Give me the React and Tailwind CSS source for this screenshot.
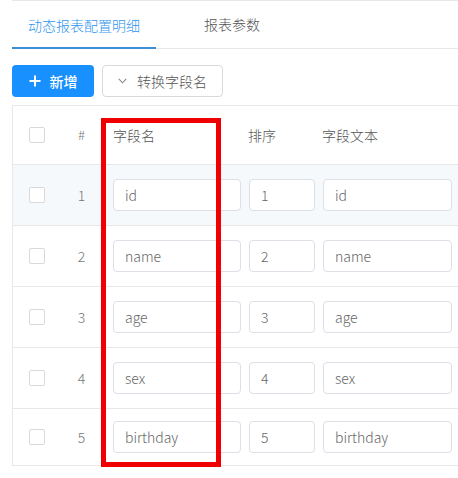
import React from 'react';

const rows = [
  { no: 1, name: 'id', sort: '1', text: 'id' },
  { no: 2, name: 'name', sort: '2', text: 'name' },
  { no: 3, name: 'age', sort: '3', text: 'age' },
  { no: 4, name: 'sex', sort: '4', text: 'sex' },
  { no: 5, name: 'birthday', sort: '5', text: 'birthday' },
];

const Checkbox = () => (
  <span className="block w-4 h-4 border border-[#d9d9d9] rounded-[2px] bg-white"></span>
);

const Field = ({ value, width }) => (
  <div className={`${width} h-[32px] border border-[#dcdfe6] rounded-[4px] bg-white flex items-center px-[11px] text-[14px] font-light text-[#666]`}>
    {value}
  </div>
);

const App = () => {
  return (
    <div className="relative w-[458px] h-[478px] overflow-hidden bg-white font-['Noto_Sans_CJK_SC',sans-serif]">
      <div className="pl-3">
        {/* tabs */}
        <div className="border-t border-b border-[#e8e8e8] h-[49px] flex items-end">
          <div className="h-full flex items-center justify-center px-4 mr-8 text-[14px] font-light text-[#2f95ee] border-b-2 border-[#3a8fd6] translate-y-[1px] pt-[2px]">
            动态报表配置明细
          </div>
          <div className="h-full flex items-center px-4 text-[14px] font-light text-[#555]">
            报表参数
          </div>
        </div>

        {/* toolbar */}
        <div className="flex gap-2 mt-4 h-8">
          <button className="w-[82px] h-8 rounded-[4px] bg-[#1890ff] text-white text-[14px] flex items-center justify-center gap-[9px] font-medium">
            <svg width="12" height="12" viewBox="0 0 12 12">
              <path d="M6 0.5v11M0.5 6h11" stroke="white" strokeWidth="2" />
            </svg>
            <span>新增</span>
          </button>
          <button className="w-[121px] h-8 rounded-[4px] border border-[#d9d9d9] bg-white text-[14px] font-light text-[#555] flex items-center justify-center gap-[10px]">
            <svg width="9" height="6" viewBox="0 0 9 6">
              <path d="M0.8 0.8L4.5 4.8L8.2 0.8" fill="none" stroke="#888" strokeWidth="1.1" />
            </svg>
            <span>转换字段名</span>
          </button>
        </div>

        {/* table */}
        <div className="mt-2 border-l border-t border-[#e8e8e8]">
          <div className="h-[59px] flex items-center border-b border-[#e8e8e8] text-[14px] font-light text-[#555]">
            <div className="w-[48px] flex justify-center"><Checkbox /></div>
            <div className="w-[41px] text-center text-[#777] text-[13px]">#</div>
            <div className="pl-[11px] w-[146px]">字段名</div>
            <div className="w-[74px]">排序</div>
            <div>字段文本</div>
          </div>
          {rows.map((r, i) => (
            <div
              key={r.no}
              className={`flex items-center border-b border-[#e8e8e8] ${i === 0 ? 'bg-[#f6f9fc]' : ''} ${i === rows.length - 1 ? 'h-[57px]' : 'h-[61px]'}`}
            >
              <div className="w-[48px] flex justify-center"><Checkbox /></div>
              <div className="w-[41px] text-center text-[14px] font-light text-[#777]">{r.no}</div>
              <div className="pl-[11px] flex">
                <Field value={r.name} width="w-[128px]" />
                <div className="w-2"></div>
                <Field value={r.sort} width="w-[66px]" />
                <div className="w-2"></div>
                <Field value={r.text} width="w-[129px]" />
              </div>
            </div>
          ))}
        </div>
      </div>

      {/* highlight box */}
      <div className="absolute left-[101px] top-[118px] w-[120px] h-[349px] border-[5px] border-[#f00000]"></div>
    </div>
  );
};

export default App;
